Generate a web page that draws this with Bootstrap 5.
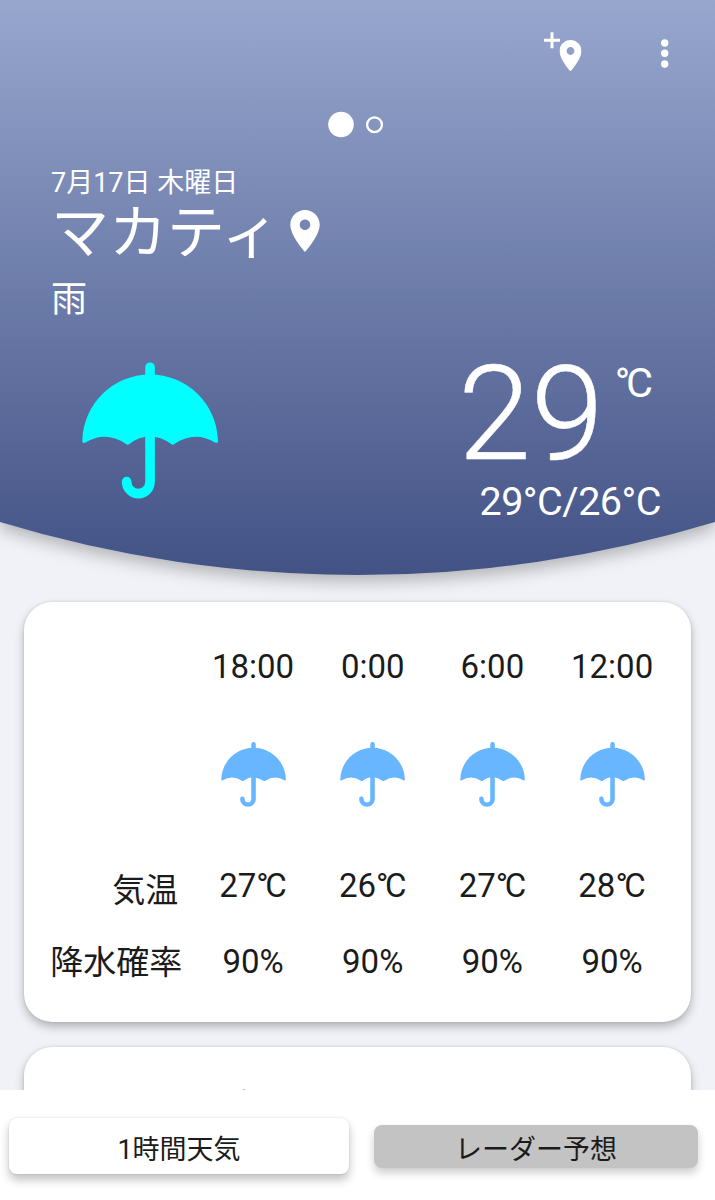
<!DOCTYPE html>
<html lang="ja">
<head>
<meta charset="utf-8">
<meta name="viewport" content="width=device-width, initial-scale=1">
<title>天気</title>
<link rel="stylesheet" href="https://cdn.jsdelivr.net/npm/bootstrap@5.3.0/dist/css/bootstrap.min.css">
<style>
body{font-family:Roboto,"Noto Sans CJK JP",sans-serif;background:#f0f2f7;color:#1b1b1b;height:1200px;overflow:hidden}
svg{display:block}
.hero{height:575px}
.hero-bg{left:0;top:0;z-index:-1;overflow:visible;filter:drop-shadow(0 7px 8px rgba(0,0,0,.25))}
.tools{height:111px;padding:32px 46px 0 0}
.tools .add-pin{margin-right:79px}
.dots{height:27px;padding-left:327px}
.place{padding-left:51px}
.date-line{font-size:27px;line-height:32px;margin-top:29px}
.city{font-size:58px;line-height:64px;height:64px}
.city-name{padding-top:3px}
.city-pin{margin-left:10px}
.sky{font-size:36px;line-height:42px;margin-top:16px}
.now{padding:41px 54px 0 82px}
.temp-row{margin-top:2px}
.temp-big{font-size:131.5px;line-height:100px;font-weight:300;-webkit-text-stroke:.5px #fff}
.unit{font-size:41.5px;line-height:40px;margin:-1px 8px 0 11px}
.unit .deg{letter-spacing:-4.3px}
.range{font-size:39.5px;line-height:44px;letter-spacing:-.5px;margin-top:16px}
.panel{border-radius:28px;margin:0 24px;background:#fff;box-shadow:0 5px 10px rgba(0,0,0,.25),0 0 3px rgba(0,0,0,.12)}
.forecast{margin-top:27px;height:420px}
.fgrid{display:grid;grid-template-columns:169.2px repeat(4,119.7px);font-size:33px;line-height:40px;grid-template-rows:95px 124px 76px 40px;padding-top:45px;text-align:center}
.fgrid .rowname{text-align:right;padding:1px 11px 0 0;white-space:nowrap}
.fgrid .rowname-temp{padding:5px 15px 0 0}
.fgrid .deg{letter-spacing:-3.4px}
.umb{color:#68b6ff}
.next-panel{margin-top:25px;height:120px;padding:42px 0 0 218px}
.bottom-bar{height:110px;background:#fff;padding:28px 17px 0 9px;font-size:27px;gap:25px;z-index:2}
.tab-on,.tab-off{border-radius:8px}
.tab-on{width:340px;height:56px;padding-top:9px;background:#fff;box-shadow:0 6px 10px rgba(0,0,0,.24),0 0 2px rgba(0,0,0,.14)}
.tab-off{width:324px;height:43px;margin-top:7px;padding-top:8px;background:#c3c3c3;box-shadow:0 5px 9px rgba(0,0,0,.2)}
</style>
</head>
<body class="d-flex flex-column">
<svg width="0" height="0" class="position-absolute">
  <symbol id="umbrella" viewBox="22.5 23 135.5 136">
    <path fill="currentColor" d="M22.8 101C24 64 54 35.2 90.3 35.2S157 64 158 101Q158.200 104.500 155 103Q135 91 115 104.200Q113 106 111 104.200Q101 97 90.300 97Q79.500 97 70 104.200Q68 106 66 104.200Q46 91 26 103Q22.600 104.500 22.800 101Z"/>
    <path fill="none" stroke="currentColor" stroke-width="9.600" stroke-linecap="round" d="M90.300 28V142a11.650 11.900 0 0 1-23.300 0"/>
  </symbol>
  <symbol id="pin" viewBox="5 2 14 20">
    <path fill="currentColor" d="M12 2C8.130 2 5 5.130 5 9c0 5.250 7 13 7 13s7-7.750 7-13c0-3.870-3.130-7-7-7zm0 9.500c-1.380 0-2.500-1.120-2.500-2.500s1.120-2.500 2.500-2.500 2.500 1.120 2.500 2.500-1.120 2.500-2.500 2.500z"/>
  </symbol>
</svg>
<main class="flex-grow-1 overflow-hidden position-relative z-0">
  <header class="hero position-relative text-white">
    <svg class="hero-bg position-absolute" width="715" height="576" viewBox="0 0 715 576">
      <defs><linearGradient id="sky" x1="0" y1="0" x2="0" y2="1"><stop offset="0" stop-color="#97a7ce"/><stop offset="1" stop-color="#435285"/></linearGradient></defs>
      <path fill="url(#sky)" d="M0 0H715V522A1232 1232 0 0 1 0 522Z"/>
    </svg>
    <div class="tools d-flex justify-content-end">
      <svg class="add-pin" width="38" height="40" viewBox="544 32 38 40"><path d="M552 32.200v16M544 40.300h16" stroke="#fff" stroke-width="3"/><use href="#pin" x="559.500" y="40" width="22" height="31.400"/></svg>
      <svg width="8" height="40" viewBox="660.900 32 8 40" fill="#fff"><circle cx="664.600" cy="43" r="3.700"/><circle cx="664.600" cy="53.300" r="3.700"/><circle cx="664.600" cy="64" r="3.700"/></svg>
    </div>
    <div class="dots">
      <svg width="60" height="27" viewBox="327 111 60 27"><circle cx="341" cy="124.500" r="12.800" fill="#fff"/><circle cx="374.500" cy="124.700" r="7.400" fill="none" stroke="#fff" stroke-width="2.300"/></svg>
    </div>
    <div class="place">
      <div class="date-line">7月17日 木曜日</div>
      <div class="city d-flex align-items-center"><span class="city-name">マカティ</span><svg class="city-pin" width="30" height="42"><use href="#pin"/></svg></div>
      <div class="sky">雨</div>
    </div>
    <div class="now d-flex justify-content-between">
      <svg width="136" height="137" color="#0ff"><use href="#umbrella"/></svg>
      <div class="text-end">
        <div class="temp-row d-flex justify-content-end"><span class="temp-big">29</span><span class="unit"><span class="deg">°</span>C</span></div>
        <div class="range">29°C/26°C</div>
      </div>
    </div>
  </header>
  <section class="panel forecast">
    <div class="fgrid">
      <span></span><span>18:00</span><span>0:00</span><span>6:00</span><span>12:00</span>
      <span></span>
      <span><svg class="umb mx-auto" width="65" height="65"><use href="#umbrella"/></svg></span>
      <span><svg class="umb mx-auto" width="65" height="65"><use href="#umbrella"/></svg></span>
      <span><svg class="umb mx-auto" width="65" height="65"><use href="#umbrella"/></svg></span>
      <span><svg class="umb mx-auto" width="65" height="65"><use href="#umbrella"/></svg></span>
      <span class="rowname rowname-temp">気温</span><span>27<span class="deg">°</span>C</span><span>26<span class="deg">°</span>C</span><span>27<span class="deg">°</span>C</span><span>28<span class="deg">°</span>C</span>
      <span class="rowname">降水確率</span><span>90%</span><span>90%</span><span>90%</span><span>90%</span>
    </div>
  </section>
  <section class="panel next-panel"><svg width="4" height="4"><circle cx="2" cy="2" r="1.800" fill="#8fa39d"/></svg></section>
</main>
<footer class="bottom-bar d-flex align-items-start flex-shrink-0 position-relative">
  <div class="tab-on d-flex align-items-center justify-content-center">1時間天気</div>
  <div class="tab-off d-flex align-items-center justify-content-center">レーダー予想</div>
</footer>
<script src="https://cdn.jsdelivr.net/npm/bootstrap@5.3.0/dist/js/bootstrap.bundle.min.js"></script>
</body>
</html>
